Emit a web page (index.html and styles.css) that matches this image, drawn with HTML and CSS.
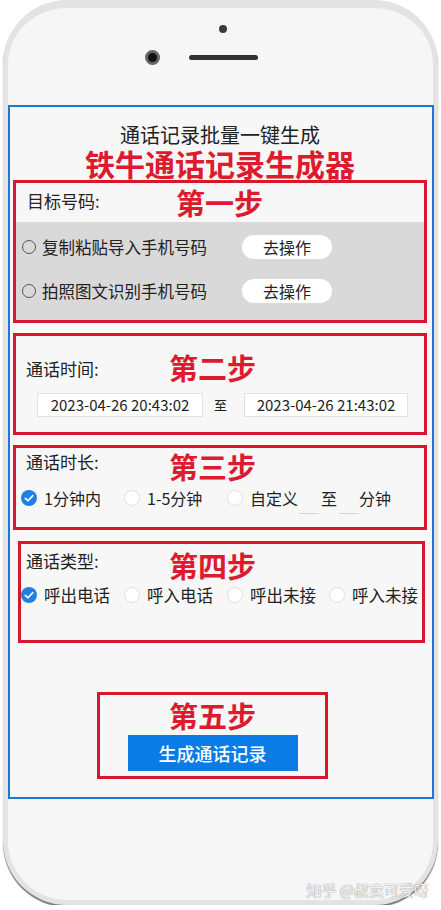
FILE: index.html
```html
<!DOCTYPE html>
<html lang="zh-CN">
<head>
<meta charset="utf-8">
<title>铁牛通话记录生成器</title>
<link rel="stylesheet" href="styles.css">
</head>
<body>
<div class="phone">
  <div class="top">
    <div class="dot"></div>
    <div class="cam-row">
      <div class="cam"></div>
      <div class="speaker"></div>
    </div>
  </div>
  <div class="screen">
    <div class="title">通话记录批量一键生成</div>
    <div class="brand">铁牛通话记录生成器</div>

    <div class="box box1">
      <div class="head head1">
        <span class="label">目标号码:</span>
        <span class="step">第一步</span>
      </div>
      <div class="gray">
        <div class="opt-row">
          <span class="hollow"></span>
          <span class="opt-text">复制粘贴导入手机号码</span>
          <span class="pill">去操作</span>
        </div>
        <div class="opt-row">
          <span class="hollow"></span>
          <span class="opt-text">拍照图文识别手机号码</span>
          <span class="pill">去操作</span>
        </div>
      </div>
    </div>

    <div class="box box2">
      <div class="head">
        <span class="label">通话时间:</span>
        <span class="step">第二步</span>
      </div>
      <div class="dates">
        <span class="date d1">2023-04-26 20:43:02</span>
        <span class="to">至</span>
        <span class="date d2">2023-04-26 21:43:02</span>
      </div>
    </div>

    <div class="box box3">
      <div class="head head3">
        <span class="label lift">通话时长:</span>
        <span class="step">第三步</span>
      </div>
      <div class="radios">
        <span class="radio r1"><span class="chk"><svg viewBox="0 0 16 16" width="16" height="16"><path d="M4.3 8.3 L7 10.8 L11.8 5.6" fill="none" stroke="#fff" stroke-width="1.6" stroke-linecap="round" stroke-linejoin="round"/></svg></span>1分钟内</span>
        <span class="radio r1"><span class="unchk"></span>1-5分钟</span>
        <span class="radio"><span class="unchk"></span>自定义<span class="blank"></span><span class="mid">至</span><span class="blank"></span><span class="unit">分钟</span></span>
      </div>
    </div>

    <div class="box box4">
      <div class="head head4">
        <span class="label lift">通话类型:</span>
        <span class="step">第四步</span>
      </div>
      <div class="radios radios4">
        <span class="radio r1"><span class="chk"><svg viewBox="0 0 16 16" width="16" height="16"><path d="M4.3 8.3 L7 10.8 L11.8 5.6" fill="none" stroke="#fff" stroke-width="1.6" stroke-linecap="round" stroke-linejoin="round"/></svg></span>呼出电话</span>
        <span class="radio r1"><span class="unchk"></span>呼入电话</span>
        <span class="radio r3"><span class="unchk"></span>呼出未接</span>
        <span class="radio"><span class="unchk"></span>呼入未接</span>
      </div>
    </div>

    <div class="box box5">
      <div class="step">第五步</div>
      <div class="gen">生成通话记录</div>
    </div>
  </div>
  <div class="mark">知乎 @叔卖可爱呀</div>
</div>
</body>
</html>
```

FILE: styles.css
```css
* { box-sizing: border-box; }
body {
  margin: 0;
  background: #ffffff;
  font-family: "Noto Sans CJK SC", "Noto Sans", sans-serif;
  color: #222;
}
.phone {
  width: 435px;
  height: 905px;
  margin-left: 3px;
  border: 5px solid #e3e3e3;
  border-top-width: 8px;
  border-radius: 64px;
  background: #f6f6f6;
  box-shadow: 0 2px 1px #777;
  display: flex;
  flex-direction: column;
}
.top {
  height: 97px;
  display: flex;
  flex-direction: column;
  align-items: center;
}
.dot {
  width: 8px;
  height: 8px;
  border-radius: 50%;
  background: #3a3a3a;
  margin-top: 17px;
  margin-left: 4px;
}
.cam-row {
  display: flex;
  align-items: center;
  gap: 29px;
  margin-top: 17px;
  margin-right: 38px;
}
.cam {
  width: 15px;
  height: 15px;
  border-radius: 50%;
  background: #111;
  border: 3px solid #666;
}
.speaker {
  width: 69px;
  height: 5px;
  border-radius: 3px;
  background: #333;
}
.screen {
  height: 695px;
  margin-right: -1px;
  border: 2px solid #1b78d6;
  background: #f7f7f7;
  padding: 0 5px 0 3px;
  display: flex;
  flex-direction: column;
}
.title {
  margin-top: 17px;
  font-size: 20px;
  line-height: 22px;
  text-align: center;
  color: #222;
}
.brand {
  margin-top: 1px;
  font-size: 30px;
  line-height: 32px;
  font-weight: bold;
  text-align: center;
  color: #dd1a2e;
}
.box {
  border: 3px solid #d9172c;
}
.box1 { margin-top: 1px; height: 143px; }
.head {
  display: flex;
  align-items: center;
  height: 34px;
  padding-left: 10px;
}
.head1 { height: 39px; padding-left: 11px; }
.label {
  font-size: 17px;
  line-height: 22px;
  width: 143px;
  flex: none;
  margin-top: 4px;
}
.head1 .label { width: 149px; margin-top: -3px; }
.lift { margin-top: 0; margin-bottom: 8px; }
.step {
  font-size: 29px;
  line-height: 34px;
  font-weight: bold;
  color: #dd1a2e;
}
.gray {
  background: #d9d9d9;
  padding: 13px 0 17px 6px;
  display: flex;
  flex-direction: column;
  gap: 20px;
}
.opt-row {
  display: flex;
  align-items: center;
  height: 24px;
}
.hollow {
  width: 14px;
  height: 14px;
  border-radius: 50%;
  border: 1.5px solid #555;
  flex: none;
}
.opt-text {
  width: 206px;
  padding-left: 6px;
  font-size: 16.5px;
  color: #222;
  flex: none;
}
.pill {
  width: 90px;
  height: 24px;
  border-radius: 12px;
  background: #fff;
  font-size: 16px;
  line-height: 24px;
  text-align: center;
}
.box2 { margin-top: 10px; height: 102px; padding-top: 14px; }
.dates {
  display: flex;
  align-items: center;
  margin-top: 9px;
  padding-left: 21px;
}
.date {
  height: 24px;
  background: #fff;
  border: 1px solid #e2e2e2;
  font-size: 15px;
  line-height: 22px;
  text-align: center;
  color: #222;
}
.d1 { width: 166px; }
.d2 { width: 164px; }
.to {
  font-size: 13px;
  margin: 0 17px 0 11px;
}
.box3 { margin-top: 10px; height: 85px; padding-top: 1px; }
.radios {
  display: flex;
  align-items: center;
  height: 20px;
  margin-top: 5px;
  padding-left: 5px;
}
.radio {
  display: flex;
  align-items: center;
  font-size: 16px;
  line-height: 20px;
  color: #222;
  flex: none;
}
.r1 { width: 103px; }
.r3 { width: 102px; }
.chk {
  width: 16px;
  height: 16px;
  border-radius: 50%;
  background: #1f7fe3;
  margin-right: 7px;
  display: flex;
}
.unchk {
  width: 16px;
  height: 16px;
  border-radius: 50%;
  background: #fff;
  border: 1px solid #e0e0e0;
  margin-right: 7px;
}
.blank {
  width: 20px;
  height: 22px;
  border-bottom: 1px solid #d4d4d4;
  margin-top: 10px;
  margin-left: 1px;
}
.mid { margin: 0 1px 0 2px; }
.unit { margin-left: 0; }
.radios4 .radio { font-size: 16.5px; }
.box4 { margin: 11px 2px 0 5px; height: 102px; padding-top: 4px; }
.box4 .head { padding-left: 5px; }
.radios4 { margin-top: 3px; padding-left: 0; }
.box5 {
  margin: 49px 0 0 84px;
  width: 231px;
  height: 87px;
  padding-top: 3px;
  display: flex;
  flex-direction: column;
  align-items: center;
}
.gen {
  margin-top: 3px;
  width: 170px;
  height: 36px;
  background: #0b7be6;
  color: #fff;
  font-size: 18px;
  line-height: 36px;
  text-align: center;
  font-weight: 500;
}
.mark {
  margin-top: 80px;
  align-self: flex-end;
  margin-right: 4px;
  font-size: 15px;
  color: #f4f4f4;
  text-shadow: 0 0 1px #999, 0 0 1px #999;
}
```
